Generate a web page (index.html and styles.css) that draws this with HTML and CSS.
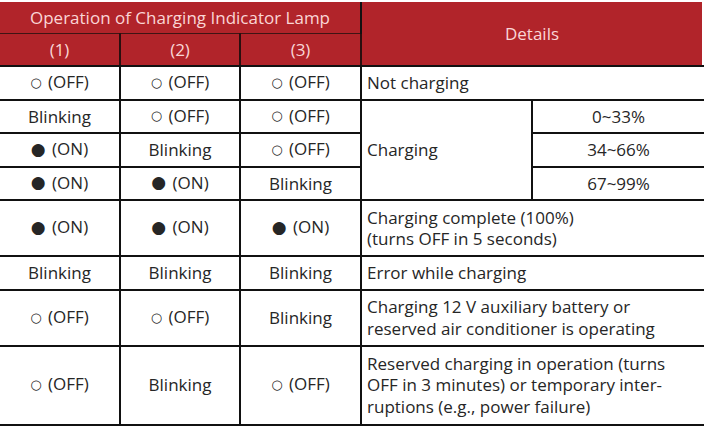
FILE: index.html
```html
<!DOCTYPE html>
<html>
<head>
<meta charset="utf-8">
<link rel="stylesheet" href="styles.css">
</head>
<body>
<table class="lamp-table">
  <colgroup>
    <col class="c-lamp"><col class="c-lamp"><col class="c-lamp3"><col class="c-det"><col class="c-pct">
  </colgroup>
  <thead>
    <tr class="h1">
      <th colspan="3" class="th-top">Operation of Charging Indicator Lamp</th>
      <th colspan="2" rowspan="2" class="th-details">Details</th>
    </tr>
    <tr class="h2">
      <th class="th-sub">(1)</th>
      <th class="th-sub">(2)</th>
      <th class="th-sub">(3)</th>
    </tr>
  </thead>
  <tbody>
    <tr class="r1">
      <td class="st"><span class="g off">○</span> (OFF)</td>
      <td class="st"><span class="g off">○</span> (OFF)</td>
      <td class="st"><span class="g off">○</span> (OFF)</td>
      <td class="det" colspan="2">Not charging</td>
    </tr>
    <tr class="r1">
      <td class="st">Blinking</td>
      <td class="st"><span class="g off">○</span> (OFF)</td>
      <td class="st"><span class="g off">○</span> (OFF)</td>
      <td class="det" rowspan="3">Charging</td>
      <td class="pct">0~33%</td>
    </tr>
    <tr class="r1">
      <td class="st"><span class="g on">●</span> (ON)</td>
      <td class="st">Blinking</td>
      <td class="st"><span class="g off">○</span> (OFF)</td>
      <td class="pct">34~66%</td>
    </tr>
    <tr class="r1">
      <td class="st"><span class="g on">●</span> (ON)</td>
      <td class="st"><span class="g on">●</span> (ON)</td>
      <td class="st">Blinking</td>
      <td class="pct">67~99%</td>
    </tr>
    <tr class="r2">
      <td class="st"><span class="g on">●</span> (ON)</td>
      <td class="st"><span class="g on">●</span> (ON)</td>
      <td class="st"><span class="g on">●</span> (ON)</td>
      <td class="det" colspan="2">Charging complete (100%)<br>(turns OFF in 5 seconds)</td>
    </tr>
    <tr class="r1">
      <td class="st">Blinking</td>
      <td class="st">Blinking</td>
      <td class="st">Blinking</td>
      <td class="det" colspan="2">Error while charging</td>
    </tr>
    <tr class="r2">
      <td class="st"><span class="g off">○</span> (OFF)</td>
      <td class="st"><span class="g off">○</span> (OFF)</td>
      <td class="st">Blinking</td>
      <td class="det" colspan="2">Charging 12 V auxiliary battery or<br>reserved air conditioner is operating</td>
    </tr>
    <tr class="r3">
      <td class="st"><span class="g off">○</span> (OFF)</td>
      <td class="st">Blinking</td>
      <td class="st"><span class="g off">○</span> (OFF)</td>
      <td class="det" colspan="2">Reserved charging in operation (turns<br>OFF in 3 minutes) or temporary inter-<br>ruptions (e.g., power failure)</td>
    </tr>
  </tbody>
</table>
</body>
</html>
```

FILE: styles.css
```css
html, body {
  margin: 0;
  padding: 0;
  background: #ffffff;
}
body {
  padding-top: 2px;
  font-family: "Open Sans", "Noto Sans", "DejaVu Sans", sans-serif;
  color: #262626;
}
.lamp-table {
  width: 704px;
  border-collapse: collapse;
  table-layout: fixed;
  font-size: 17px;
  line-height: 21.5px;
}
.c-lamp { width: 120px; }
.c-lamp3 { width: 121px; }
.c-det { width: 171px; }
.c-pct { width: 172px; }

th {
  background: #b1242a;
  color: #fad6d6;
  font-weight: 400;
  padding: 0;
  text-align: center;
}
.th-top {
  height: 31px;
  border-bottom: 1px solid #3f1414;
  border-right: 2px solid #111111;
}
.th-sub {
  height: 31px;
  border-right: 2px solid #2a0f0f;
  border-bottom: 2px solid #111111;
}
.th-details {
  border-bottom: 2px solid #111111;
  background: linear-gradient(to right, #b1242a calc(100% - 2px), #ffffff 0);
  padding-right: 2px;
}

td {
  border: 2px solid #111111;
  padding: 0 5px;
  vertical-align: middle;
}
tr td:first-child { border-left: none; }
tr td:last-child { border-right: none; }
.pct { border-right: none; }

.r1 td { height: 31.5px; }
.r2 td { height: 54px; }
.r3 td { height: 77px; }

.st { text-align: center; white-space: nowrap; }
.det { text-align: left; }
.pct { text-align: center; }

.g {
  font-family: "DejaVu Sans", sans-serif;
  display: inline-block;
  vertical-align: middle;
  position: relative;
  top: -1px;
}
.g.off { font-size: 13px; margin-right: 2px; }
.g.on { font-size: 17px; margin-right: 2px; }
```
